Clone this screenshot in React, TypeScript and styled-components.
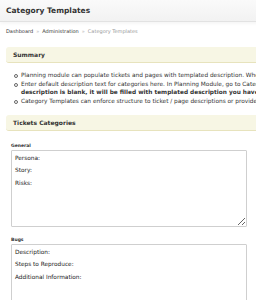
import React from 'react';
import styled, { createGlobalStyle } from 'styled-components';

const GlobalStyle = createGlobalStyle`
  html, body {
    margin: 0;
    padding: 0;
    background: #fff;
    overflow: hidden;
  }
  body {
    font-family: "DejaVu Sans", Verdana, sans-serif;
    color: #333;
  }
`;

const Page = styled.div`
  width: 520px;
`;

const Header = styled.div`
  height: 21px;
  display: flex;
  align-items: center;
  padding: 0 6px;
  background: linear-gradient(#fafafa, #f2f2f2);
  border-bottom: 1px solid #e2e2e2;
  box-shadow: 0 2px 3px rgba(0, 0, 0, 0.04);
`;

const Title = styled.h1`
  margin: 0;
  font-size: 7.5px;
  font-weight: bold;
  color: #333;
`;

const Crumbs = styled.div`
  display: flex;
  align-items: center;
  gap: 3px;
  height: 18px;
  padding: 0 6px;
  font-size: 5px;
`;

const Crumb = styled.span<{ $current?: boolean }>`
  color: ${p => (p.$current ? '#999' : '#333')};
`;

const Sep = styled.span`
  color: #bbb;
`;

const Content = styled.div`
  padding: 7px 0 0 6px;
`;

const SectionBar = styled.div`
  height: 15px;
  display: flex;
  align-items: center;
  padding-left: 7px;
  background: #f7f6e4;
  border-bottom: 1px solid #e7e3bd;
  border-radius: 3px 0 0 3px;
  font-size: 6px;
  font-weight: bold;
  color: #333;
`;

const Bullets = styled.ul`
  margin: 8px 0 9px;
  padding: 0 0 0 15px;
  list-style: none;
`;

const Bullet = styled.li`
  position: relative;
  font-size: 5.8px;
  line-height: 8.7px;
  white-space: nowrap;
  color: #333;

  &::before {
    content: '';
    position: absolute;
    left: -7px;
    top: 3px;
    width: 2px;
    height: 2px;
    border: 0.6px solid #666;
    border-radius: 50%;
  }
`;

const Strong = styled.b`
  font-weight: bold;
`;

const Categories = styled.div`
  padding: 12px 0 0 5px;
`;

const FieldLabel = styled.label`
  display: block;
  font-size: 4.5px;
  font-weight: bold;
  color: #333;
  margin-bottom: 2px;
`;

const TemplateArea = styled.textarea`
  display: block;
  box-sizing: border-box;
  width: 236px;
  height: 77px;
  margin: 0 0 10px;
  padding: 1px 3px;
  border: 1px solid #cfcfcf;
  border-radius: 1px;
  font-family: "DejaVu Sans", Verdana, sans-serif;
  font-size: 5.8px;
  line-height: 12.5px;
  color: #222;
  background: #fff;
  outline: none;
`;

const categories = [
  { name: 'General', text: 'Persona:\nStory:\nRisks:' },
  { name: 'Bugs', text: 'Description:\nSteps to Reproduce:\nAdditional Information:' },
];

export default function App() {
  return (
    <Page>
      <GlobalStyle />
      <Header>
        <Title>Category Templates</Title>
      </Header>
      <Crumbs>
        <Crumb>Dashboard</Crumb>
        <Sep>»</Sep>
        <Crumb>Administration</Crumb>
        <Sep>»</Sep>
        <Crumb $current>Category Templates</Crumb>
      </Crumbs>
      <Content>
        <SectionBar>Summary</SectionBar>
        <Bullets>
          <Bullet>Planning module can populate tickets and pages with templated description. When a ticket is created,</Bullet>
          <Bullet>
            Enter default description text for categories here. In Planning Module, go to Category drop-down; if the
            <br />
            <Strong>description is blank, it will be filled with templated description you have specified.</Strong>
          </Bullet>
          <Bullet>Category Templates can enforce structure to ticket / page descriptions or provide guidance.</Bullet>
        </Bullets>
        <SectionBar>Tickets Categories</SectionBar>
        <Categories>
          {categories.map(c => (
            <div key={c.name}>
              <FieldLabel>{c.name}</FieldLabel>
              <TemplateArea defaultValue={c.text} />
            </div>
          ))}
        </Categories>
      </Content>
    </Page>
  );
}
